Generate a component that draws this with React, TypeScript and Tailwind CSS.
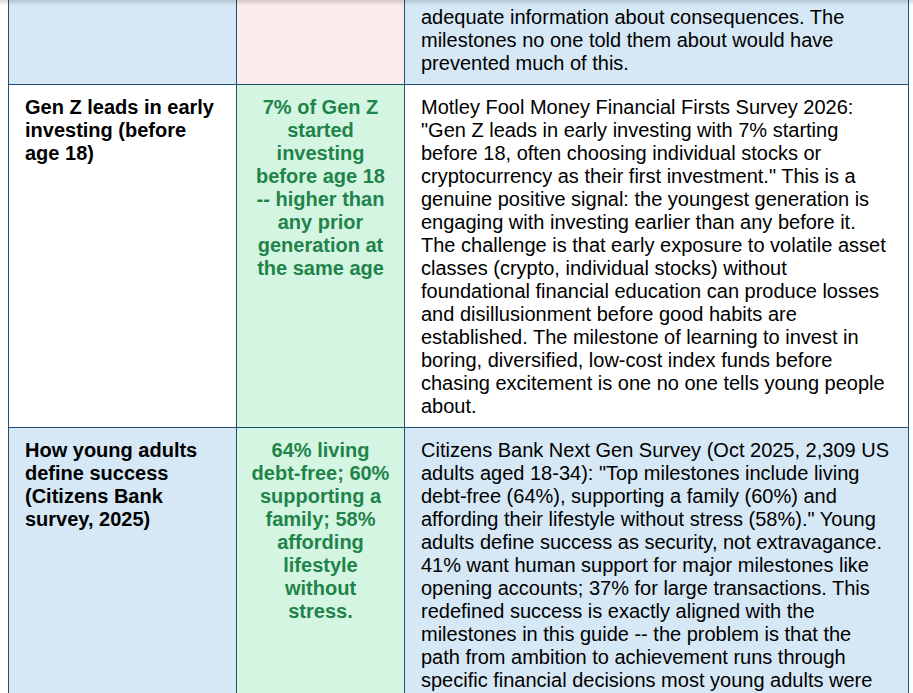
import React from "react"

type Row = {
  topic: React.ReactNode
  stat: React.ReactNode
  detail: string
  bg: string
  statBg: string
  first?: boolean
}

const rows: Row[] = [
  {
    topic: "",
    stat: "",
    detail:
      "adequate information about consequences. The milestones no one told them about would have prevented much of this.",
    bg: "bg-[#d6e8f6]",
    statBg: "bg-[#fcebeb]",
    first: true,
  },
  {
    topic: "Gen Z leads in early investing (before age 18)",
    stat: "7% of Gen Z started investing before age 18 -- higher than any prior generation at the same age",
    detail:
      "Motley Fool Money Financial Firsts Survey 2026: \"Gen Z leads in early investing with 7% starting before 18, often choosing individual stocks or cryptocurrency as their first investment.\" This is a genuine positive signal: the youngest generation is engaging with investing earlier than any before it. The challenge is that early exposure to volatile asset classes (crypto, individual stocks) without foundational financial education can produce losses and disillusionment before good habits are established. The milestone of learning to invest in boring, diversified, low-cost index funds before chasing excitement is one no one tells young people about.",
    bg: "bg-white",
    statBg: "bg-[#d5f5e3]",
  },
  {
    topic: "How young adults define success (Citizens Bank survey, 2025)",
    stat: "64% living debt-free; 60% supporting a family; 58% affording lifestyle without stress.",
    detail:
      "Citizens Bank Next Gen Survey (Oct 2025, 2,309 US adults aged 18-34): \"Top milestones include living debt-free (64%), supporting a family (60%) and affording their lifestyle without stress (58%).\" Young adults define success as security, not extravagance. 41% want human support for major milestones like opening accounts; 37% for large transactions. This redefined success is exactly aligned with the milestones in this guide -- the problem is that the path from ambition to achievement runs through specific financial decisions most young adults were never taught to make.",
    bg: "bg-[#d6e8f6]",
    statBg: "bg-[#d5f5e3]",
  },
]

function TableRow({ topic, stat, detail, bg, statBg, first }: Row) {
  const pad = first ? "pt-[6px] pb-[9px]" : "pt-[11px] pb-[9px]"
  return (
    <tr className={first ? "" : "border-t border-[#1f4e79]"}>
      <td className={`${bg} ${pad} px-[16px] align-top font-bold text-black border-r border-[#1f4e79]`}>
        {topic}
      </td>
      <td className={`${statBg} ${pad} px-[13px] align-top font-bold text-center text-[#1e8449] border-r border-[#1f4e79]`}>
        {stat}
      </td>
      <td className={`${bg} ${pad} px-[16px] align-top text-black`}>{detail}</td>
    </tr>
  )
}

export default function App() {
  return (
    <div className="relative h-[693px] w-[913px] overflow-hidden bg-white font-['Liberation_Sans',Arial,sans-serif] text-[20px] leading-[23px]">
      <table className="ml-[8px] w-[901px] table-fixed border-collapse border-x border-[#1f4e79]">
        <colgroup>
          <col className="w-[228px]" />
          <col className="w-[168px]" />
          <col />
        </colgroup>
        <tbody>
          {rows.map((r, i) => (
            <TableRow key={i} {...r} />
          ))}
        </tbody>
      </table>
      <div className="pointer-events-none absolute inset-x-0 top-0 h-[6px] bg-gradient-to-b from-black/15 to-transparent" />
    </div>
  )
}
